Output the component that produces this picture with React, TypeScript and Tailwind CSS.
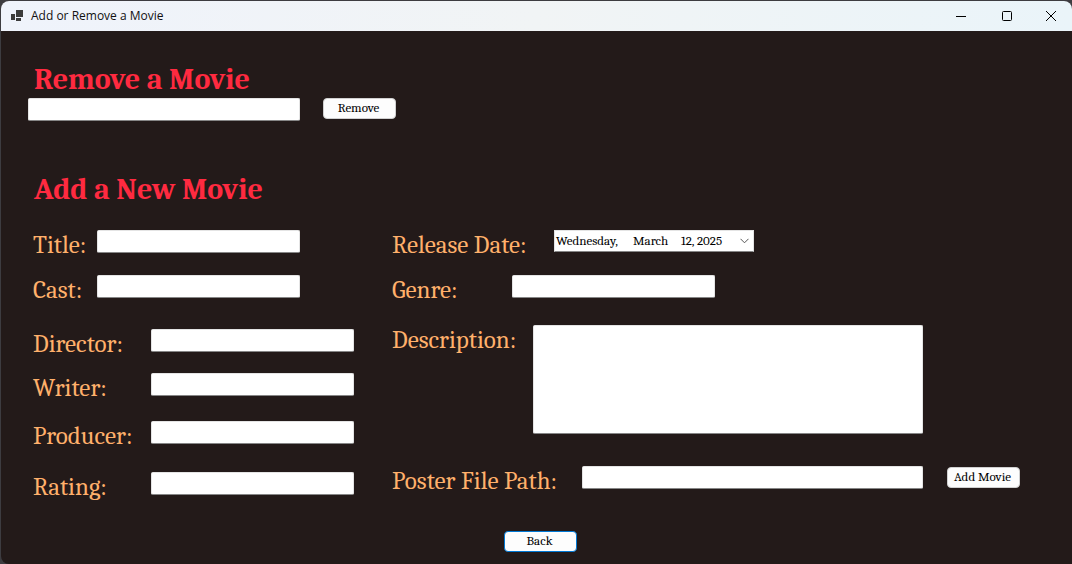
import React from "react";

const inputClass =
  "block h-[23px] rounded-[2px] border border-[#e4e4e4] border-b-[#868686] bg-white px-1 text-[13px] text-black outline-none";
const buttonClass =
  "flex h-[21px] w-[73px] shrink-0 items-center justify-center rounded-[4px] border bg-[#fdfdfd] pb-px pr-0.5 text-[13px] leading-4 text-black";
const labelClass = "h-[23px] shrink-0 whitespace-nowrap text-[25px] leading-[30px] text-[#ffb06b]";
const headingClass = "pl-1.5 text-[30px] font-bold leading-9 text-[#ff2a40]";

type FieldProps = {
  id: string;
  label: string;
  labelWidth: string;
  inputWidth?: string;
  className?: string;
};

function Field({ id, label, labelWidth, inputWidth = "w-[203px]", className = "" }: FieldProps) {
  return (
    <div className={`flex items-start ${className}`}>
      <label htmlFor={id} className={`${labelClass} ${labelWidth}`}>
        {label}
      </label>
      <input id={id} type="text" className={`${inputClass} ${inputWidth}`} />
    </div>
  );
}

function TitleBar() {
  return (
    <header className="flex h-[30px] items-center bg-linear-to-r from-[#eff3fb] via-[#f1f4f5] to-[#eaf4f9] pl-2.5">
      <svg width="12" height="12" viewBox="0 0 12 12" aria-hidden="true" fill="#3b3b3b">
        <rect x="0" y="4" width="4" height="6" />
        <rect x="5" y="0" width="7" height="7" />
        <rect x="5" y="8" width="5" height="3" />
      </svg>
      <h1 className="ml-2 grow font-['Open_Sans',sans-serif] text-xs leading-4 text-[#111]">Add or Remove a Movie</h1>
      <button type="button" aria-label="Minimize" className="flex h-full w-[46px] items-center justify-center">
        <svg width="10" height="10" viewBox="0 0 10 10" aria-hidden="true" stroke="#000" fill="none">
          <path d="M0 5.5H10" />
        </svg>
      </button>
      <button type="button" aria-label="Maximize" className="flex h-full w-[46px] items-center justify-center">
        <svg width="10" height="10" viewBox="0 0 10 10" aria-hidden="true" stroke="#000" fill="none">
          <rect x="0.5" y="0.5" width="9" height="9" rx="1" />
        </svg>
      </button>
      <button type="button" aria-label="Close" className="flex h-full w-[42px] items-center justify-center">
        <svg width="10" height="10" viewBox="0 0 10 10" aria-hidden="true" stroke="#000" fill="none">
          <path d="M0 0L10 10M10 0L0 10" />
        </svg>
      </button>
    </header>
  );
}

export default function App() {
  return (
    <div className="flex min-h-screen flex-col bg-[#3d3c40] pl-px pt-px font-[Cambria,Caladea,'Liberation_Serif',serif]">
      <div className="flex grow flex-col overflow-hidden rounded-l-lg rounded-tr-lg bg-[#231a19]">
        <TitleBar />
        <main className="grow pb-3 pl-[27px] pt-[31px]">
          <section>
            <h2 className={headingClass}>
              <label htmlFor="remove">Remove a Movie</label>
            </h2>
            <div className="flex items-start gap-[23px]">
              <input id="remove" type="text" className={`${inputClass} w-[272px]`} />
              <button type="button" className={`${buttonClass} border-[#d0d0d0]`}>
                Remove
              </button>
            </div>
          </section>

          <section className="mt-[51px]">
            <h2 className={headingClass}>Add a New Movie</h2>
            <form className="mt-[22px] flex items-start pl-[5px]">
              <div className="w-[359px] shrink-0">
                <Field id="title" label="Title:" labelWidth="w-16" />
                <Field id="cast" label="Cast:" labelWidth="w-16" className="mt-[22px]" />
                <Field id="director" label="Director:" labelWidth="w-[118px]" className="mt-[31px]" />
                <Field id="writer" label="Writer:" labelWidth="w-[118px]" className="mt-[21px]" />
                <Field id="producer" label="Producer:" labelWidth="w-[118px]" className="mt-[25px]" />
                <Field id="rating" label="Rating:" labelWidth="w-[118px]" className="mt-[28px]" />
              </div>
              <div>
                <div className="flex items-start">
                  <label htmlFor="date" className={`${labelClass} w-[162px]`}>
                    Release Date:
                  </label>
                  <button
                    id="date"
                    type="button"
                    aria-haspopup="dialog"
                    className="flex h-[22px] w-[200px] items-center border border-[#e4e4e4] border-b-[#868686] bg-white pl-px pr-1 text-[13px] leading-4 text-black"
                  >
                    <span className="w-[77px] text-left">Wednesday,</span>
                    <span className="w-12 text-left">March</span>
                    <span className="grow text-left">12, 2025</span>
                    <svg width="9" height="6" viewBox="0 0 9 6" aria-hidden="true" stroke="#555" fill="none">
                      <path d="M0.5 0.8L4.5 4.8L8.5 0.8" />
                    </svg>
                  </button>
                </div>
                <Field id="genre" label="Genre:" labelWidth="w-[120px]" className="mt-[22px]" />
                <div className="mt-[27px] flex items-start">
                  <label htmlFor="description" className={`${labelClass} w-[141px]`}>
                    Description:
                  </label>
                  <textarea
                    id="description"
                    className="block h-[109px] w-[390px] resize-none rounded-[2px] border border-[#e4e4e4] border-b-[#868686] bg-white px-1 text-[13px] text-black outline-none"
                  />
                </div>
                <div className="mt-8 flex items-start gap-6">
                  <Field id="poster" label="Poster File Path:" labelWidth="w-[190px]" inputWidth="w-[341px]" />
                  <button type="button" className={`${buttonClass} mt-px border-[#d0d0d0]`}>
                    Add Movie
                  </button>
                </div>
              </div>
            </form>
          </section>

          <div className="mt-9 flex justify-center pr-[19px]">
            <button type="button" className={`${buttonClass} border-[#0078d4]`}>
              Back
            </button>
          </div>
        </main>
      </div>
    </div>
  );
}
